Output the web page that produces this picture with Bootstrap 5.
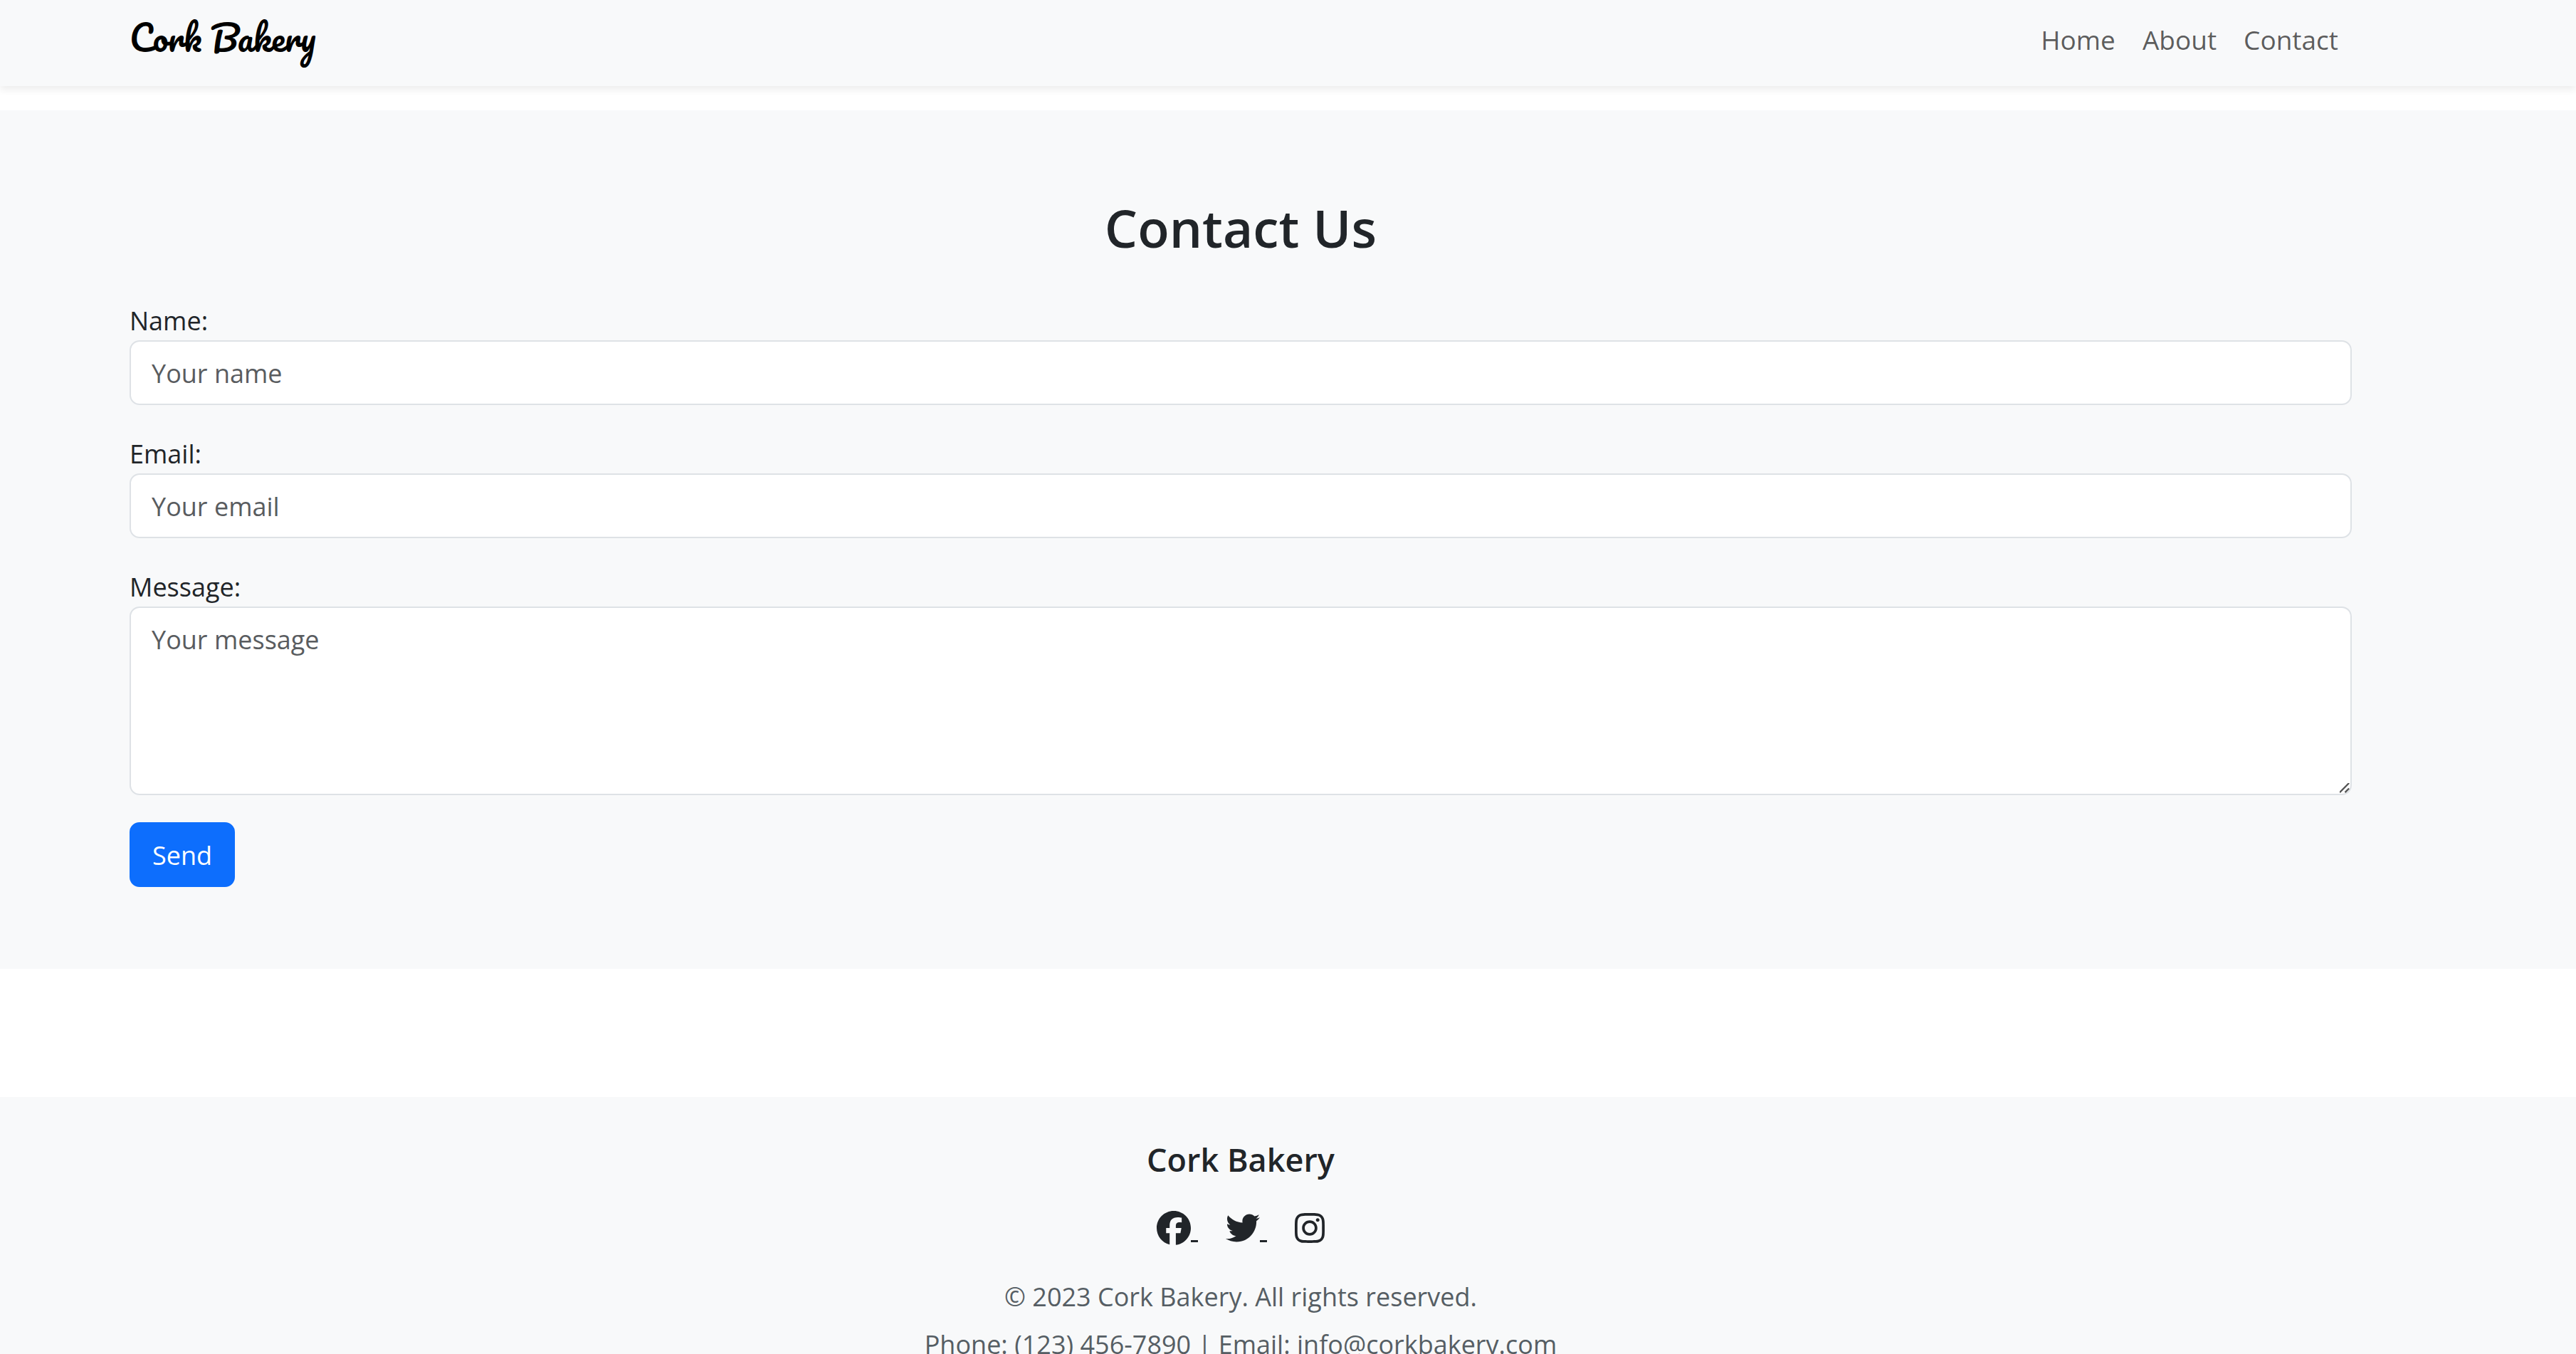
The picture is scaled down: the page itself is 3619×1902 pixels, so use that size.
<!DOCTYPE html>
<html lang="en">
<head>
<meta charset="utf-8">
<meta name="viewport" content="width=device-width, initial-scale=1">
<title>Cork Bakery</title>
<link rel="stylesheet" href="https://cdn.jsdelivr.net/npm/bootstrap@5.3.0/dist/css/bootstrap.min.css">
<style>
body { font-family: "Segoe UI", "Open Sans", "Noto Sans", sans-serif; font-size: 36px; line-height: 58px; overflow-x: hidden; }
.page-band { padding-right: 133px; }
.page-wrap { width: 100%; max-width: 3182px; margin: 0 auto; padding: 0 30px; }
.site-nav { padding-top: 0; padding-bottom: 10px; height: 121px; box-shadow: 0 5px 10px rgba(0, 0, 0, .075); }
.site-nav .navbar-brand { font-family: Pacifico, cursive; font-weight: 400; font-size: 48px; line-height: 72px; color: #000; padding: 0 0 5px; margin: 0; }
.site-nav .navbar-nav .nav-link { font-size: 37px; padding: 0 19px; color: rgba(0, 0, 0, .65); }
.contact-band { margin-top: 34px; padding-top: 115px; padding-bottom: 115px; }
.contact-title { font-size: 73px; line-height: 100px; font-weight: 600; margin-bottom: 50px; }
.field-group { margin-bottom: 38px; }
.field-group label { display: block; padding-top: 4px; line-height: 54px; }
.contact-band .form-control { font-size: 36px; line-height: 57px; padding: 16px 29px 14px; border: 2px solid #dee2e6; border-radius: 14px; }
.contact-band input.form-control { height: 91px; }
.contact-band textarea.form-control { height: 265px; }
.contact-band textarea::-webkit-resizer { background: url("data:image/svg+xml,%3Csvg xmlns='http://www.w3.org/2000/svg' viewBox='0 0 16 16'%3E%3Cpath d='M0 14L14 0M8 14L14 8' stroke='%23555' stroke-width='2.5'/%3E%3C/svg%3E") center / 100% 100% no-repeat; }
.contact-band .form-control::placeholder { color: #595c5f; }
.send-btn { font-size: 36px; line-height: 57px; padding: 16px 30px 14px; border: 2px solid #0d6efd; border-radius: 14px; }
.site-footer { margin-top: 180px; padding-top: 58px; padding-bottom: 58px; }
.footer-title { font-size: 45px; line-height: 60px; font-weight: 600; margin-bottom: 37px; }
.social-list { gap: 39px; height: 58px; margin-bottom: 39px; }
.social-list a { color: #212529; text-decoration: none; }
.social-list svg { height: 48px; fill: currentColor; }
.social-dash { width: 10px; height: 3px; background: currentColor; margin-bottom: 4px; }
.footer-text { color: #565e64; margin-bottom: 9px; }
</style>
</head>
<body>
<nav class="site-nav page-band navbar navbar-expand bg-light">
  <div class="page-wrap d-flex align-items-center justify-content-between">
    <a class="navbar-brand" href="#">Cork Bakery</a>
    <ul class="navbar-nav">
      <li class="nav-item"><a class="nav-link" href="#">Home</a></li>
      <li class="nav-item"><a class="nav-link" href="#">About</a></li>
      <li class="nav-item"><a class="nav-link" href="#">Contact</a></li>
    </ul>
  </div>
</nav>
<section class="contact-band page-band bg-light">
  <div class="page-wrap">
    <h2 class="contact-title text-center">Contact Us</h2>
    <form>
      <div class="field-group">
        <label for="name">Name:</label>
        <input type="text" class="form-control" id="name" placeholder="Your name">
      </div>
      <div class="field-group">
        <label for="email">Email:</label>
        <input type="email" class="form-control" id="email" placeholder="Your email">
      </div>
      <div class="field-group">
        <label for="message">Message:</label>
        <textarea class="form-control" id="message" placeholder="Your message"></textarea>
      </div>
      <button type="submit" class="btn btn-primary send-btn">Send</button>
    </form>
  </div>
</section>
<footer class="site-footer page-band bg-light text-center">
  <div class="page-wrap">
    <h5 class="footer-title">Cork Bakery</h5>
    <div class="social-list d-flex justify-content-center align-items-center">
      <a href="#" class="d-flex align-items-end" aria-label="Facebook"><svg width="48" viewBox="0 0 512 512"><path d="M512 256C512 114.6 397.4 0 256 0S0 114.6 0 256C0 376 82.7 476.8 194.2 504.5V334.2H141.4V256h52.8V222.3c0-87.1 39.4-127.5 125-127.5c16.2 0 44.2 3.2 55.7 6.4V172c-6-.6-16.5-1-29.6-1c-42 0-58.2 15.9-58.2 57.2V256h83.6l-14.4 78.2H287V510.1C413.8 494.8 512 386.9 512 256z"/></svg><span class="social-dash"></span></a>
      <a href="#" class="d-flex align-items-end" aria-label="Twitter"><svg width="48" viewBox="0 0 512 512"><path d="M459.37 151.716c.325 4.548.325 9.097.325 13.645 0 138.72-105.583 298.558-298.558 298.558-59.452 0-114.68-17.219-161.137-47.106 8.447.974 16.568 1.299 25.34 1.299 49.055 0 94.213-16.568 130.274-44.832-46.132-.975-84.792-31.188-98.112-72.772 6.498.974 12.995 1.624 19.818 1.624 9.421 0 18.843-1.3 27.614-3.573-48.081-9.747-84.143-51.98-84.143-102.985v-1.299c13.969 7.797 30.214 12.67 47.431 13.319-28.264-18.843-46.781-51.005-46.781-87.391 0-19.492 5.197-37.36 14.294-52.954 51.655 63.675 129.3 105.258 216.365 109.807-1.624-7.797-2.599-15.918-2.599-24.04 0-57.828 46.782-104.934 104.934-104.934 30.213 0 57.502 12.67 76.67 33.137 23.715-4.548 46.456-13.32 66.599-25.34-7.798 24.366-24.366 44.833-46.132 57.827 21.117-2.273 41.584-8.122 60.426-16.243-14.292 20.791-32.161 39.308-52.628 54.253z"/></svg><span class="social-dash"></span></a>
      <a href="#" class="d-flex align-items-end" aria-label="Instagram"><svg width="42" viewBox="0 0 448 512"><path d="M224.1 141c-63.6 0-114.9 51.3-114.9 114.9s51.3 114.9 114.9 114.9S339 319.5 339 255.9 287.7 141 224.1 141zm0 189.6c-41.1 0-74.7-33.5-74.7-74.7s33.5-74.7 74.7-74.7 74.7 33.5 74.7 74.7-33.6 74.7-74.7 74.7zm146.4-194.3c0 14.9-12 26.8-26.8 26.8-14.9 0-26.8-12-26.8-26.8s12-26.8 26.8-26.8 26.8 12 26.8 26.8zm76.1 27.2c-1.7-35.9-9.9-67.7-36.2-93.9-26.2-26.2-58-34.4-93.9-36.2-37-2.1-147.9-2.1-184.9 0-35.8 1.7-67.6 9.9-93.9 36.1s-34.4 58-36.2 93.9c-2.1 37-2.1 147.9 0 184.9 1.7 35.9 9.9 67.7 36.2 93.9s58 34.4 93.9 36.2c37 2.1 147.9 2.1 184.9 0 35.9-1.7 67.7-9.9 93.9-36.2 26.2-26.2 34.4-58 36.2-93.9 2.1-37 2.1-147.8 0-184.8zM398.8 388c-7.8 19.6-22.9 34.7-42.6 42.6-29.5 11.7-99.5 9-132.1 9s-102.7 2.6-132.1-9c-19.6-7.8-34.7-22.9-42.6-42.6-11.7-29.5-9-99.5-9-132.1s-2.6-102.7 9-132.1c7.8-19.6 22.9-34.7 42.6-42.6 29.5-11.7 99.5-9 132.1-9s102.7-2.6 132.1 9c19.6 7.8 34.7 22.9 42.6 42.6 11.7 29.5 9 99.5 9 132.1s2.7 102.7-9 132.1z"/></svg></a>
    </div>
    <p class="footer-text">© 2023 Cork Bakery. All rights reserved.</p>
    <p class="footer-text mb-0">Phone: (123) 456-7890 | Email: info@corkbakery.com</p>
  </div>
</footer>
<script src="https://cdn.jsdelivr.net/npm/bootstrap@5.3.0/dist/js/bootstrap.bundle.min.js"></script>
</body>
</html>
